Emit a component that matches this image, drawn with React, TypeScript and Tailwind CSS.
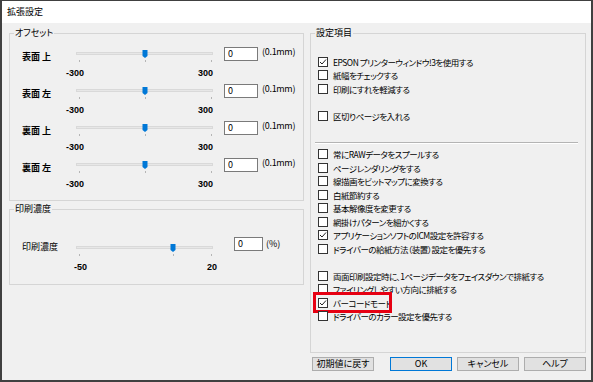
import React from "react";

function Slider({ pos, ticks }: { pos: number; ticks: number[] }) {
  return (
    <svg width="137" height="16" viewBox="0 0 137 16" className="block">
      <rect x="0.5" y="4.5" width="136" height="2" fill="#e7e7e7" stroke="#d9d9d9" strokeWidth="1" />
      {ticks.map((t) => (
        <rect key={t} x={t} y="12" width="1" height="2" fill="#b5b5b5" />
      ))}
      <polygon
        points={`${pos - 2.5},2 ${pos + 2.5},2 ${pos + 2.5},8 ${pos},10 ${pos - 2.5},8`}
        fill="#0078d7"
      />
    </svg>
  );
}

const NUM = "font-['Liberation_Sans',sans-serif] font-bold text-[9px]";

function OffsetRow({ label }: { label: string }) {
  return (
    <div className="flex h-[37px] items-start">
      <div className="w-[54px] mt-[4px] leading-[12px] font-bold">{label}</div>
      <div className="flex flex-col mt-[1px]">
        <Slider pos={69} ticks={[3, 69, 135]} />
        <div className={`ml-[-10px] w-[147px] mt-[3px] leading-[12px] flex justify-between ${NUM}`}>
          <span>-300</span>
          <span>300</span>
        </div>
      </div>
      <div className="ml-[11px] w-[34px] h-[14px] bg-white border border-[#7a7a7a] pl-[3px] leading-[12px]">0</div>
      <div className="ml-[4px] leading-[12px] mt-[-1px] tracking-[-0.3px]">(0.1mm)</div>
    </div>
  );
}

function Check({ checked, label, mark }: { checked?: boolean; label: string; mark?: boolean }) {
  return (
    <div className="relative flex items-center h-[13.5px]">
      <div className="w-[10px] h-[10px] border border-[#333] bg-white flex items-center justify-center shrink-0">
        {checked && (
          <svg width="8" height="8" viewBox="0 0 8 8">
            <polyline points="1,4 3,6 7,1.5" fill="none" stroke="#222" strokeWidth="1" />
          </svg>
        )}
      </div>
      <span className="ml-[5px] whitespace-nowrap leading-[12px] text-[8.5px] tracking-[-0.5px]">{label}</span>
      {mark && (
        <div className="absolute left-[-5px] top-[-4px] w-[79px] h-[21px] border-[3px] border-[#e60012]" />
      )}
    </div>
  );
}

function Group({ title, className, children }: { title: string; className: string; children: React.ReactNode }) {
  return (
    <div className={`relative border border-[#d5d5d5] ${className}`}>
      <span className="absolute left-[4px] top-[-7px] px-[1px] bg-[#f0f0f0] leading-[12px]">{title}</span>
      {children}
    </div>
  );
}

export default function App() {
  return (
    <div className="w-[593px] h-[382px] flex flex-col border-t border-x-2 border-b-2 border-[#404040] bg-[#f0f0f0] text-[9px] text-black font-['Noto_Sans_CJK_JP','Noto_Sans',sans-serif] [font-feature-settings:'palt']">
      <div className="h-[22px] bg-white flex items-center pl-[5px] leading-[12px]">拡張設定</div>
      <div className="flex-1 flex pt-[10px] pl-[7px]">
        <div className="w-[295px] flex flex-col">
          <Group title="オフセット" className="h-[168px] pt-[13px] pl-[12px]">
            <OffsetRow label="表面 上" />
            <OffsetRow label="表面 左" />
            <OffsetRow label="裏面 上" />
            <OffsetRow label="裏面 左" />
          </Group>
          <Group title="印刷濃度" className="mt-[8px] h-[76px] pt-[27px] pl-[12px]">
            <div className="flex items-start">
              <div className="w-[54px] mt-[4px] leading-[12px]">印刷濃度</div>
              <div className="flex flex-col mt-[5px]">
                <Slider pos={97} ticks={[3, 97, 135]} />
                <div className={`ml-[-2px] w-[143px] mt-[3px] leading-[12px] flex justify-between ${NUM}`}>
                  <span>-50</span>
                  <span>20</span>
                </div>
              </div>
              <div className="ml-[17px] w-[29px] h-[14px] bg-white border border-[#7a7a7a] pl-[3px] leading-[12px]">0</div>
              <div className="ml-[3px] leading-[12px] mt-[1px]">(%)</div>
            </div>
          </Group>
        </div>
        <div className="ml-[6px] w-[276px] flex flex-col">
          <Group title="設定項目" className="h-[320px] pt-[21px] pl-[7px]">
            <Check checked label="EPSON プリンターウィンドウ!3を使用する" />
            <Check label="紙幅をチェックする" />
            <Check label="印刷にすれを軽減する" />
            <div className="h-[13.5px]" />
            <Check label="区切りページを入れる" />
            <div className="mt-[19px] ml-[-3px] mr-[7px] border-t border-[#b4b4b4] border-b border-b-white" />
            <div className="mt-[4px]">
              <Check label="常にRAWデータをスプールする" />
              <Check label="ページレンダリングをする" />
              <Check label="線描画をビットマップに変換する" />
              <Check label="白紙節約する" />
              <Check label="基本解像度を変更する" />
              <Check label="網掛けパターンを細かくする" />
              <Check checked label="アプリケーションソフトのICM設定を許容する" />
              <Check label="ドライバーの給紙方法（装置）設定を優先する" />
              <div className="h-[13.5px]" />
              <Check label="両面印刷設定時に、1ページデータをフェイスダウンで排紙する" />
              <Check label="ファイリングしやすい方向に排紙する" />
              <Check checked mark label="バーコードモード" />
              <Check label="ドライバーのカラー設定を優先する" />
            </div>
          </Group>
          <div className="mt-[4px] flex">
            <button className="ml-[2px] w-[62px] h-[14px] bg-[#e1e1e1] border border-[#adadad] leading-[12px]">初期値に戻す</button>
            <button className="ml-[16px] w-[62px] h-[14px] bg-[#e1e1e1] border border-[#0078d7] leading-[12px]">OK</button>
            <button className="ml-[5px] w-[62px] h-[14px] bg-[#e1e1e1] border border-[#adadad] leading-[12px]">キャンセル</button>
            <button className="ml-[5px] w-[62px] h-[14px] bg-[#e1e1e1] border border-[#adadad] leading-[12px]">ヘルプ</button>
          </div>
        </div>
      </div>
    </div>
  );
}
